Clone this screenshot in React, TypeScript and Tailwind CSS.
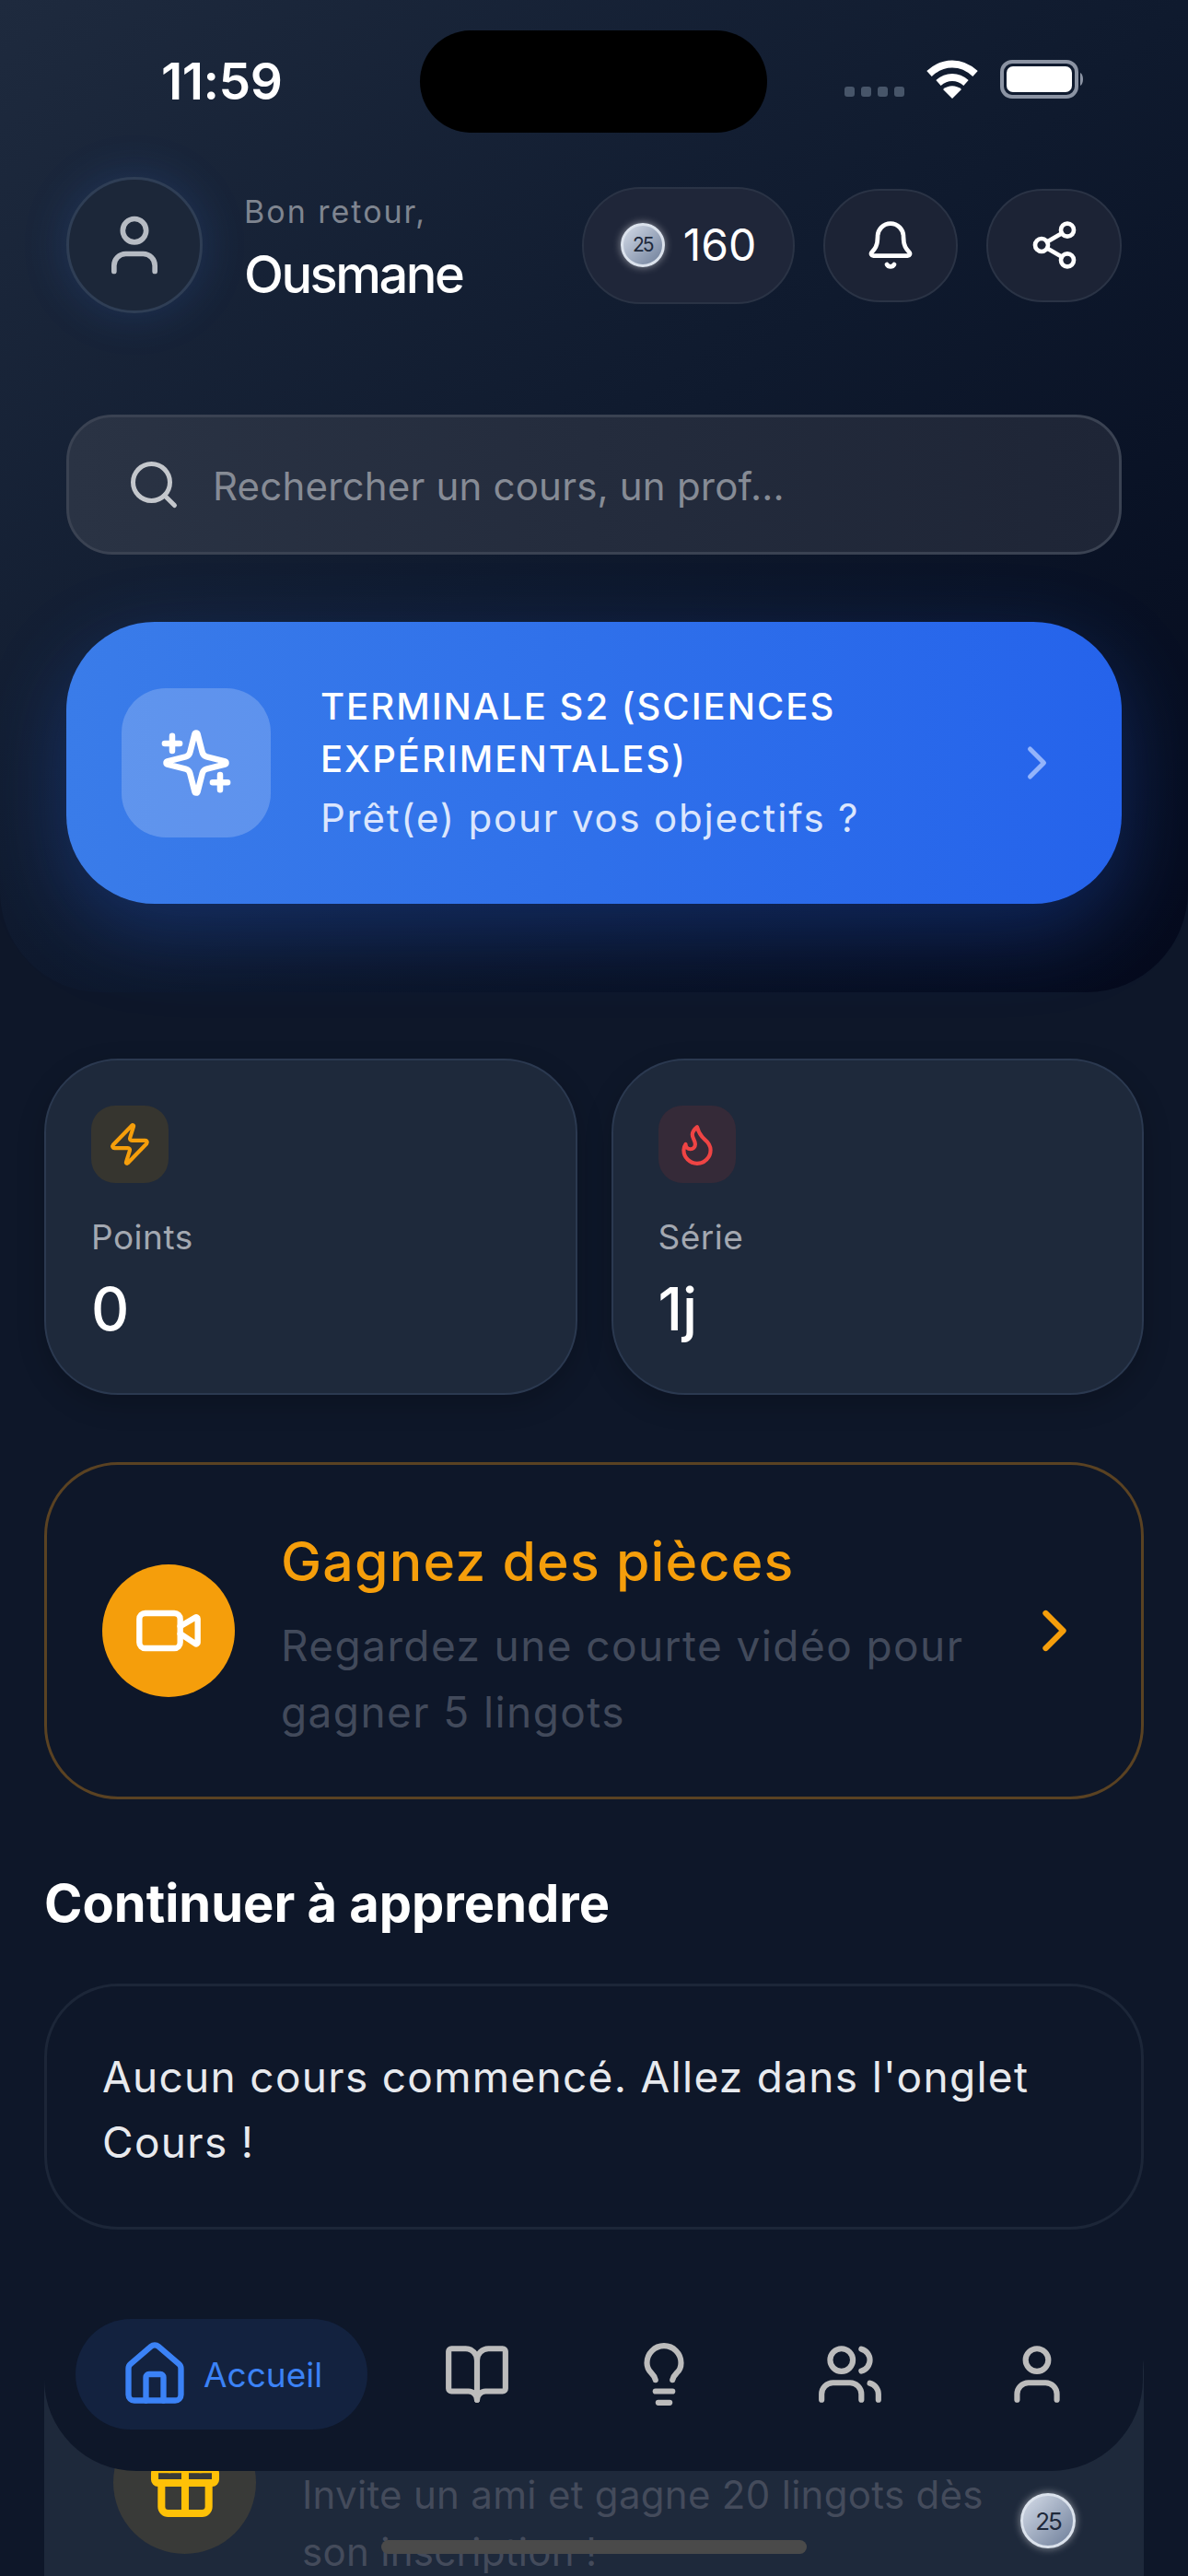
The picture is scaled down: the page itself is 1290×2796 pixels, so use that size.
import { Bell, BookOpen, ChevronRight, Flame, Gift, House, Lightbulb, Search, Share2, User, Users, Video, Zap } from "lucide-react"

function Coin({ size }: { size: "sm" | "md" }) {
  return (
    <div
      className={`flex shrink-0 items-center justify-center rounded-full border-[3px] border-[#dbe2ec] bg-gradient-to-br from-[#d5dce8] to-[#6f7f9a] text-[#1e293b] shadow-[0_0_8px_rgba(255,255,255,0.5)] ${size === "sm" ? "h-[48px] w-[48px] text-[21px] tracking-[-2px]" : "h-[60px] w-[60px] text-[26px] tracking-[-2px]"}`}
    >
      25
    </div>
  )
}

function StatusBar() {
  return (
    <div className="relative flex h-[192px] items-start justify-between pl-[175px] pr-[113px] pt-[56px]">
      <span className="text-[55px] font-semibold leading-[64px] tracking-[-0.5px] text-white">11:59</span>
      {/* dynamic island */}
      <div className="absolute left-[456px] top-[33px] h-[111px] w-[377px] rounded-full bg-black" />
      <div className="mt-[9px] flex items-end gap-[23px]">
        <div className="mb-[2px] flex gap-[7px]">
          <div className="h-[11px] w-[11px] rounded-[3px] bg-[#475569]" />
          <div className="h-[11px] w-[11px] rounded-[3px] bg-[#475569]" />
          <div className="h-[11px] w-[11px] rounded-[3px] bg-[#475569]" />
          <div className="h-[11px] w-[11px] rounded-[3px] bg-[#475569]" />
        </div>
        <svg width="58" height="42" viewBox="0 0 58 42" fill="none" stroke="white" strokeWidth="8">
          <path d="M4 15C19 1 39 1 54 15" />
          <path d="M14 25C23 17 35 17 44 25" />
          <path d="M29 42L19 32C25 27 33 27 39 32Z" fill="white" stroke="none" />
        </svg>
        <svg width="91" height="42" viewBox="0 0 91 42" fill="none">
          <rect x="2" y="2" width="81" height="38" rx="11" stroke="#8b93a3" strokeWidth="4" />
          <rect x="7" y="7" width="71" height="28" rx="7" fill="white" />
          <path d="M87 14C91 16 91 26 87 28Z" fill="#8b93a3" />
        </svg>
      </div>
    </div>
  )
}

function StatCard({ label, value, icon, tint }: { label: string; value: string; icon: React.ReactNode; tint: string }) {
  return (
    <div className="h-[365px] flex-1 rounded-[80px] border-2 border-[#2b3950] bg-[#1e293b] px-[49px] pt-[49px] shadow-[0_10px_30px_rgba(0,0,0,0.2)]">
      <div className={`flex h-[84px] w-[84px] items-center justify-center rounded-[26px] ${tint}`}>{icon}</div>
      <div className="mt-[34px] text-[37px] leading-[50px] tracking-[0.5px] text-[#a3a8b1]">{label}</div>
      <div className="mt-[15px] text-[64px] font-medium leading-[76px] text-white">{value}</div>
    </div>
  )
}

export default function App() {
  return (
    <div className="relative h-[2796px] w-[1290px] overflow-hidden bg-[#0e1729] font-['Inter',sans-serif]">
      {/* header */}
      <div className="h-[1077px] rounded-b-[110px] bg-gradient-to-br from-[#1e2a3e] via-[#0f1a2e] to-[#050a1c]">
        <StatusBar />

        <div className="flex items-center px-[72px]">
          <div className="flex h-[148px] w-[148px] items-center justify-center rounded-full border-[3px] border-[#2f3e55] bg-[#1c2739] shadow-[0_0_50px_rgba(59,130,246,0.18)]">
            <User className="h-[76px] w-[76px] text-[#b6bbc3]" strokeWidth={1.8} />
          </div>
          <div className="ml-[45px] flex-1 pt-[7px]">
            <div className="text-[34px] leading-[44px] tracking-[2px] text-[#7f8590]">Bon retour,</div>
            <div className="mt-[13px] text-[56px] font-medium leading-[66px] tracking-[-2.5px] text-white">Ousmane</div>
          </div>
          <div className="flex h-[127px] w-[231px] items-center justify-center gap-[20px] rounded-full border-2 border-[#2a3345] bg-[#1f2639]">
            <Coin size="sm" />
            <span className="text-[48px] leading-none text-white">160</span>
          </div>
          <div className="ml-[31px] flex h-[123px] w-[146px] items-center justify-center rounded-full border-2 border-[#2a3345] bg-[#1c2335]">
            <Bell className="h-[56px] w-[56px] text-white" strokeWidth={2} />
          </div>
          <div className="ml-[31px] flex h-[123px] w-[147px] items-center justify-center rounded-full border-2 border-[#2a3345] bg-[#1c2335]">
            <Share2 className="h-[56px] w-[56px] text-white" strokeWidth={2} />
          </div>
        </div>

        <div className="mx-[72px] mt-[110px] flex h-[152px] items-center rounded-[50px] border-[3px] border-[#3a4252] bg-gradient-to-r from-[#2a3344] to-[#1e2536] pl-[62px]">
          <Search className="h-[60px] w-[60px] text-[#c4c7cc]" strokeWidth={2} />
          <span className="ml-[34px] mt-[3px] text-[42px] tracking-[0.2px] text-[#868b95]">Rechercher un cours, un prof...</span>
        </div>

        <div className="mx-[72px] mt-[73px] flex h-[306px] items-center rounded-[96px] bg-gradient-to-r from-[#3a7ce9] to-[#2563eb] pl-[60px] pr-[62px] shadow-[0_30px_90px_rgba(37,99,235,0.3)]">
          <div className="flex h-[162px] w-[162px] shrink-0 items-center justify-center rounded-[48px] bg-white/20">
            <svg width="78" height="78" viewBox="0 0 24 24" fill="none" stroke="white" strokeWidth="2" strokeLinecap="round" strokeLinejoin="round">
              <path d="M9.937 15.5A2 2 0 0 0 8.5 14.063l-6.135-1.582a.5.5 0 0 1 0-.962L8.5 9.936A2 2 0 0 0 9.937 8.5l1.582-6.135a.5.5 0 0 1 .963 0L14.063 8.5A2 2 0 0 0 15.5 9.937l6.135 1.581a.5.5 0 0 1 0 .964L15.5 14.063a2 2 0 0 0-1.437 1.437l-1.582 6.135a.5.5 0 0 1-.963 0z" />
              <path d="M4 3v5M1.5 5.5h5M20 16v5M17.5 18.5h5" />
            </svg>
          </div>
          <div className="ml-[54px] flex-1">
            <div className="text-[40px] font-medium leading-[57px] tracking-[2px] text-white">
              TERMINALE S2 (SCIENCES
              <br />
              EXPÉRIMENTALES)
            </div>
            <div className="mt-[6px] text-[42px] leading-[60px] tracking-[1.8px] text-[#dbe6fd]">Prêt(e) pour vos objectifs ?</div>
          </div>
          <ChevronRight className="h-[60px] w-[60px] text-[#93b4fb]" strokeWidth={2} />
        </div>
      </div>

      {/* body */}
      <div className="px-[48px] pt-[72px]">
        <div className="flex gap-[37px]">
          <StatCard label="Points" value="0" tint="bg-[#36352f]" icon={<Zap className="h-[50px] w-[50px] text-[#f59e0b]" strokeWidth={2} />} />
          <StatCard label="Série" value="1j" tint="bg-[#352a38]" icon={<Flame className="h-[50px] w-[50px] text-[#ef4444]" strokeWidth={2} />} />
        </div>

        <div className="mt-[73px] flex h-[366px] items-center rounded-[80px] border-[3px] border-[#5a4222] pl-[60px] pr-[56px]">
          <div className="flex h-[144px] w-[144px] shrink-0 items-center justify-center rounded-full bg-[#f59e0b]">
            <Video className="h-[76px] w-[76px] text-white" strokeWidth={2} />
          </div>
          <div className="ml-[50px] flex-1 pt-[13px]">
            <div className="text-[59px] font-medium leading-[72px] tracking-[1.2px] text-[#f59e0b]">Gagnez des pièces</div>
            <div className="mt-[19px] text-[46px] leading-[72px] tracking-[1.4px] text-[#424a5b]">
              Regardez une courte vidéo pour
              <br />
              gagner 5 lingots
            </div>
          </div>
          <ChevronRight className="h-[76px] w-[76px] text-[#f59e0b]" strokeWidth={2} />
        </div>

        <h2 className="mt-[77px] text-[56px] font-bold leading-[72px] text-white">Continuer à apprendre</h2>

        <div className="mt-[51px] h-[267px] rounded-[80px] border-[3px] border-[#1c2638] px-[60px] pt-[63px] text-[46px] leading-[71px] tracking-[1.3px] text-[#e8eaee]">
          Aucun cours commencé. Allez dans l&apos;onglet
          <br />
          Cours !
        </div>

        <div className="mt-[73px] flex h-[400px] items-start rounded-[80px] bg-[#1e293b] pl-[75px] pr-[74px] pt-[124px]">
          <div className="flex h-[155px] w-[155px] shrink-0 items-center justify-center rounded-full bg-[#393a38]">
            <Gift className="h-[88px] w-[88px] text-[#ffc107]" strokeWidth={2.2} />
          </div>
          <div className="ml-[50px] flex-1 pt-[60px] text-[42px] leading-[62px] tracking-[0.3px] text-[#444b5b]">
            Invite un ami et gagne 20 lingots dès
            <br />
            son inscription !
          </div>
          <div className="mt-[89px]">
            <Coin size="md" />
          </div>
        </div>
      </div>

      {/* floating nav */}
      <div className="absolute left-[48px] top-[2480px] flex h-[202px] w-[1193px] items-start rounded-b-[100px] bg-[#0e1729] pl-[34px] pt-[37px]">
        <div className="flex h-[120px] w-[317px] items-center rounded-[60px] bg-[#13223f] pl-[48px]">
          <House className="h-[76px] w-[76px] text-[#3b82f6]" strokeWidth={2} />
          <span className="ml-[15px] text-[37px] leading-none text-[#3b82f6]">Accueil</span>
        </div>
        <div className="flex h-[120px] flex-1 items-center justify-around pl-[18px] pr-[14px] text-[#bcbcbc]">
          <BookOpen className="h-[74px] w-[74px]" strokeWidth={2} />
          <Lightbulb className="h-[74px] w-[74px]" strokeWidth={2} />
          <Users className="h-[74px] w-[74px]" strokeWidth={2} />
          <User className="h-[74px] w-[74px]" strokeWidth={2} />
        </div>
      </div>

      {/* home indicator */}
      <div className="absolute left-[414px] top-[2757px] h-[15px] w-[462px] rounded-full bg-[#4a4a4a]" />
    </div>
  )
}
